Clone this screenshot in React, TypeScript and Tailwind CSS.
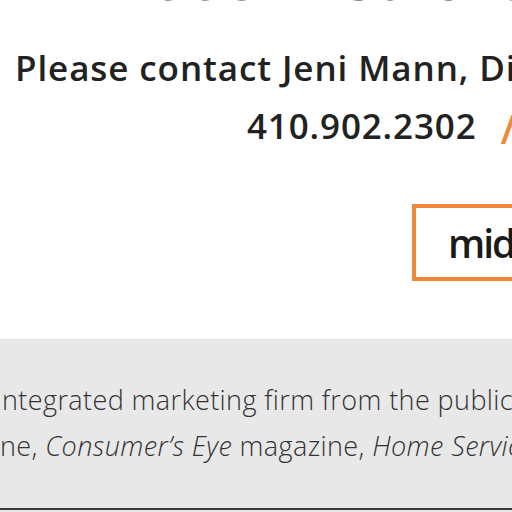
export default function App() {
  return (
    <div className="w-[512px] h-[512px] overflow-hidden bg-white font-['Open_Sans',sans-serif] text-[#222]">
      <div className="h-[12px] overflow-hidden">
        <div className="-mt-[56px] pl-[113px] whitespace-nowrap text-[64px] leading-[64px] font-bold text-[#222]">
          2008 Media Contact
        </div>
      </div>
      <div className="mt-[36px] pl-[15px] whitespace-nowrap text-[35px] leading-[40px] font-semibold tracking-[0.9px]">
        Please contact Jeni Mann, Director
      </div>
      <div className="mt-[18px] pl-[247px] whitespace-nowrap text-[35px] leading-[40px] font-semibold tracking-[0.85px] flex">
        <span>410.902.2302</span>
        <span className="ml-[24px] relative top-[3px] text-[40px] text-[#f0883a] font-semibold">/</span>
      </div>
      <div className="mt-[58px] pl-[412px] flex">
        <div className="h-[77px] w-[200px] shrink-0 border-4 border-[#f0883a] pl-[32px] flex items-center">
          <span className="whitespace-nowrap font-['Open_Sans',sans-serif] text-[39px] font-semibold tracking-[-2px] text-[#1a1a1a] leading-none">
            midatlantic
          </span>
        </div>
      </div>
      <div className="mt-[58px] h-[169px] bg-[#e8e8e8] border-t border-[#e0e0e0] pt-[37px] text-[27px] leading-[46px] font-light tracking-[0.4px] text-[#333] whitespace-nowrap">
        <div className="pl-[2px]">ntegrated marketing firm from the publication</div>
        <div>
          ne, <i>Consumer’s Eye</i> magazine, <i>Home Services</i>
        </div>
      </div>
      <div className="h-[2px] bg-[#3a3a3a]" />
      <div className="h-[10px] bg-[#e8e8e8]" />
    </div>
  );
}
